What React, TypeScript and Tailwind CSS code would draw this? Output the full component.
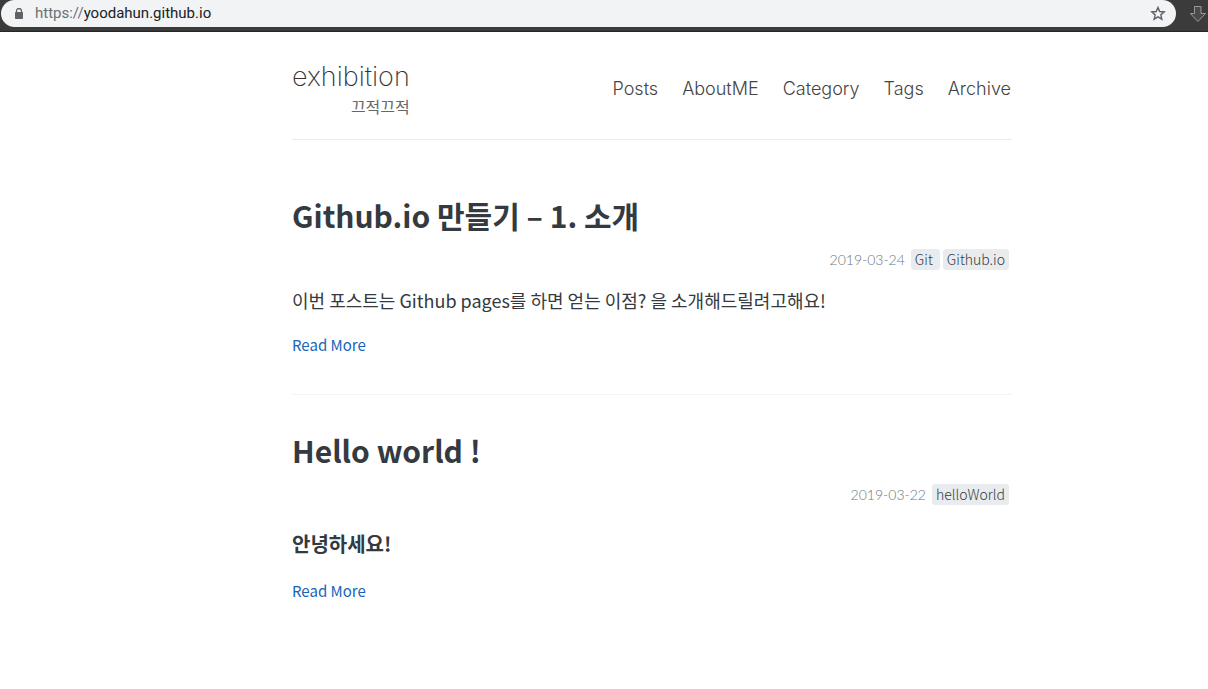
import React from "react";

type Post = { title: string; date: string; tags: string[]; excerpt: React.ReactNode };

const posts: Post[] = [
  {
    title: "Github.io 만들기 – 1. 소개",
    date: "2019-03-24",
    tags: ["Git", "Github.io"],
    excerpt: (
      <p className="mt-3.5 text-lg leading-8">
        이번 포스트는 Github pages를 하면 얻는 이점? 을 소개해드릴려고해요!
      </p>
    ),
  },
  {
    title: "Hello world !",
    date: "2019-03-22",
    tags: ["helloWorld"],
    excerpt: <h3 className="mt-[21px] text-xl leading-9 font-bold">안녕하세요!</h3>,
  },
];

const links = ["Posts", "AboutME", "Category", "Tags", "Archive"];

function LockIcon() {
  return (
    <svg viewBox="0 0 10 12" className="h-3 w-2.5" aria-hidden="true">
      <path d="M2.5 4.5V3a2.5 2.5 0 0 1 5 0v1.5" fill="none" stroke="#5f6368" strokeWidth="1.3" />
      <rect x="1" y="4" width="8" height="7" rx="0.8" fill="#5f6368" />
    </svg>
  );
}

function StarIcon() {
  return (
    <svg viewBox="0 0 16 16" className="size-4" aria-hidden="true">
      <path
        d="M8 1.4l1.75 4.15 4.45.38-3.38 2.93 1.02 4.36L8 10.9l-3.84 2.32 1.02-4.36L1.8 5.93l4.45-.38z"
        fill="none"
        stroke="#5f6368"
        strokeWidth="1.4"
        strokeLinejoin="miter"
      />
    </svg>
  );
}

function DownArrowIcon() {
  return (
    <svg viewBox="0 0 18 18" className="size-[18px]" aria-hidden="true">
      <path d="M5.5 1.5h6.500v7h4.500L8.900 16.500 1.300 8.500h4.200z" fill="#4a4a4a" stroke="#9a9a9a" strokeWidth="1" />
    </svg>
  );
}

function AddressBar() {
  return (
    <div className="flex h-8 items-start border-b border-[#262626] bg-[#3b3b3b] font-[Roboto,sans-serif] text-[15px]">
      <div className="ml-px flex h-[27px] flex-1 items-center rounded-full bg-[#f1f3f4] pr-2.5 pl-[13px]">
        <LockIcon />
        <label htmlFor="address" className="ml-[11px] text-[#6b7075]">
          https://
        </label>
        <input
          id="address"
          defaultValue="yoodahun.github.io"
          className="min-w-0 flex-1 bg-transparent text-[#202124] outline-none"
        />
        <button aria-label="Bookmark this page">
          <StarIcon />
        </button>
      </div>
      <button aria-label="Downloads" className="ml-3 flex h-[27px] w-5 items-center justify-center">
        <DownArrowIcon />
      </button>
    </div>
  );
}

export default function App() {
  return (
    <div className="min-h-screen bg-white font-['Noto_Sans_CJK_KR',sans-serif] text-[#343a40]">
      <AddressBar />
      <div className="ml-[292px] max-w-[720px]">
        <header className="flex items-start justify-between border-b border-[#e9ecef] pt-7 pb-5 text-[#333]">
          <div className="text-right">
            <a href="#" className="block font-[Inter,sans-serif] text-[27px] leading-[34px] font-extralight">
              exhibition
            </a>
            <p className="text-base leading-[25px] text-[#666]">끄적끄적</p>
          </div>
          <nav className="flex gap-6 pt-[15px] pr-px font-[Inter,sans-serif] text-lg font-light text-[#444]">
            {links.map((l) => (
              <a key={l} href="#">
                {l}
              </a>
            ))}
          </nav>
        </header>
        <main className="divide-y divide-[#f1f3f5] pt-5">
          {posts.map((p) => (
            <article key={p.title} className="pt-[35px] pb-[37px]">
              <h1 className="text-[30px] leading-10 font-bold">{p.title}</h1>
              <div className="mt-3.5 mr-[3px] flex items-center justify-end gap-[3px] text-sm leading-[21px] font-light">
                <time className="mr-[3px] font-[Lato,sans-serif] text-[#6c757d]">{p.date}</time>
                {p.tags.map((t) => (
                  <a key={t} href="#" className="min-w-[29px] rounded-[3px] bg-[#e9ecef] px-1">
                    {t}
                  </a>
                ))}
              </div>
              {p.excerpt}
              <a href="#" className="mt-[17px] block text-[15px] leading-6 text-[#1864bb]">
                Read More
              </a>
            </article>
          ))}
        </main>
      </div>
    </div>
  );
}
